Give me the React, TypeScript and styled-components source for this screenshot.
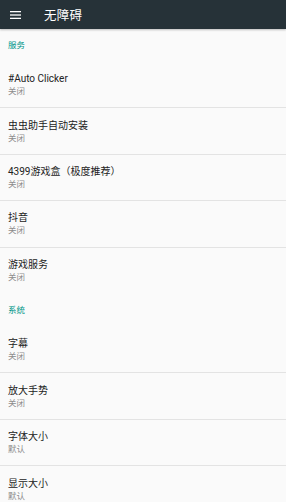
import React from 'react';
import styled, { createGlobalStyle } from 'styled-components';

const GlobalStyle = createGlobalStyle`
  html, body {
    margin: 0;
    padding: 0;
    background: #fafafa;
    font-family: Roboto, "Noto Sans CJK SC", sans-serif;
  }
`;

interface Pref {
  title: string;
  summary: string;
}

interface Section {
  name: string;
  items: Pref[];
}

const sections: Section[] = [
  {
    name: '服务',
    items: [
      { title: '#Auto Clicker', summary: '关闭' },
      { title: '虫虫助手自动安装', summary: '关闭' },
      { title: '4399游戏盒（极度推荐）', summary: '关闭' },
      { title: '抖音', summary: '关闭' },
      { title: '游戏服务', summary: '关闭' },
    ],
  },
  {
    name: '系统',
    items: [
      { title: '字幕', summary: '关闭' },
      { title: '放大手势', summary: '关闭' },
      { title: '字体大小', summary: '默认' },
      { title: '显示大小', summary: '默认' },
    ],
  },
];

const Screen = styled.div`
  width: 286px;
  height: 502px;
  overflow: hidden;
  background: #fafafa;
  display: flex;
  flex-direction: column;
`;

const Toolbar = styled.header`
  height: 29px;
  flex: 0 0 29px;
  background: #263238;
  display: flex;
  align-items: center;
  padding-left: 10px;
  gap: 23px;
  box-shadow: 0 1px 2px rgba(0, 0, 0, 0.25);
  position: relative;
  z-index: 1;
`;

const Title = styled.h1`
  margin: 0;
  color: #ffffff;
  font-size: 12.5px;
  font-weight: 400;
  letter-spacing: 0.2px;
`;

const List = styled.div`
  display: flex;
  flex-direction: column;
`;

const Category = styled.div`
  height: 33px;
  box-sizing: border-box;
  padding: 11px 8px 0;
  color: #009688;
  font-size: 8.5px;
  line-height: 10px;
`;

const Row = styled.div<{ divided: boolean }>`
  height: 46.4px;
  box-sizing: border-box;
  padding: 0 8px;
  display: flex;
  flex-direction: column;
  justify-content: center;
  border-bottom: ${({ divided }) => (divided ? '1px solid #e3e3e3' : 'none')};
`;

const RowTitle = styled.div`
  color: #222222;
  font-size: 10px;
  line-height: 13px;
`;

const RowSummary = styled.div`
  color: #8c8c8c;
  font-size: 8.5px;
  line-height: 12px;
`;

const MenuIcon = () => (
  <svg width="11" height="8" viewBox="0 0 11 8">
    <rect x="0" y="0" width="11" height="1.3" fill="#fff" />
    <rect x="0" y="3.35" width="11" height="1.3" fill="#fff" />
    <rect x="0" y="6.7" width="11" height="1.3" fill="#fff" />
  </svg>
);

export default function App() {
  return (
    <Screen>
      <GlobalStyle />
      <Toolbar>
        <MenuIcon />
        <Title>无障碍</Title>
      </Toolbar>
      <List>
        {sections.map((section) => (
          <React.Fragment key={section.name}>
            <Category>{section.name}</Category>
            {section.items.map((item, idx) => (
              <Row key={item.title} divided={idx < section.items.length - 1}>
                <RowTitle>{item.title}</RowTitle>
                <RowSummary>{item.summary}</RowSummary>
              </Row>
            ))}
          </React.Fragment>
        ))}
      </List>
    </Screen>
  );
}
